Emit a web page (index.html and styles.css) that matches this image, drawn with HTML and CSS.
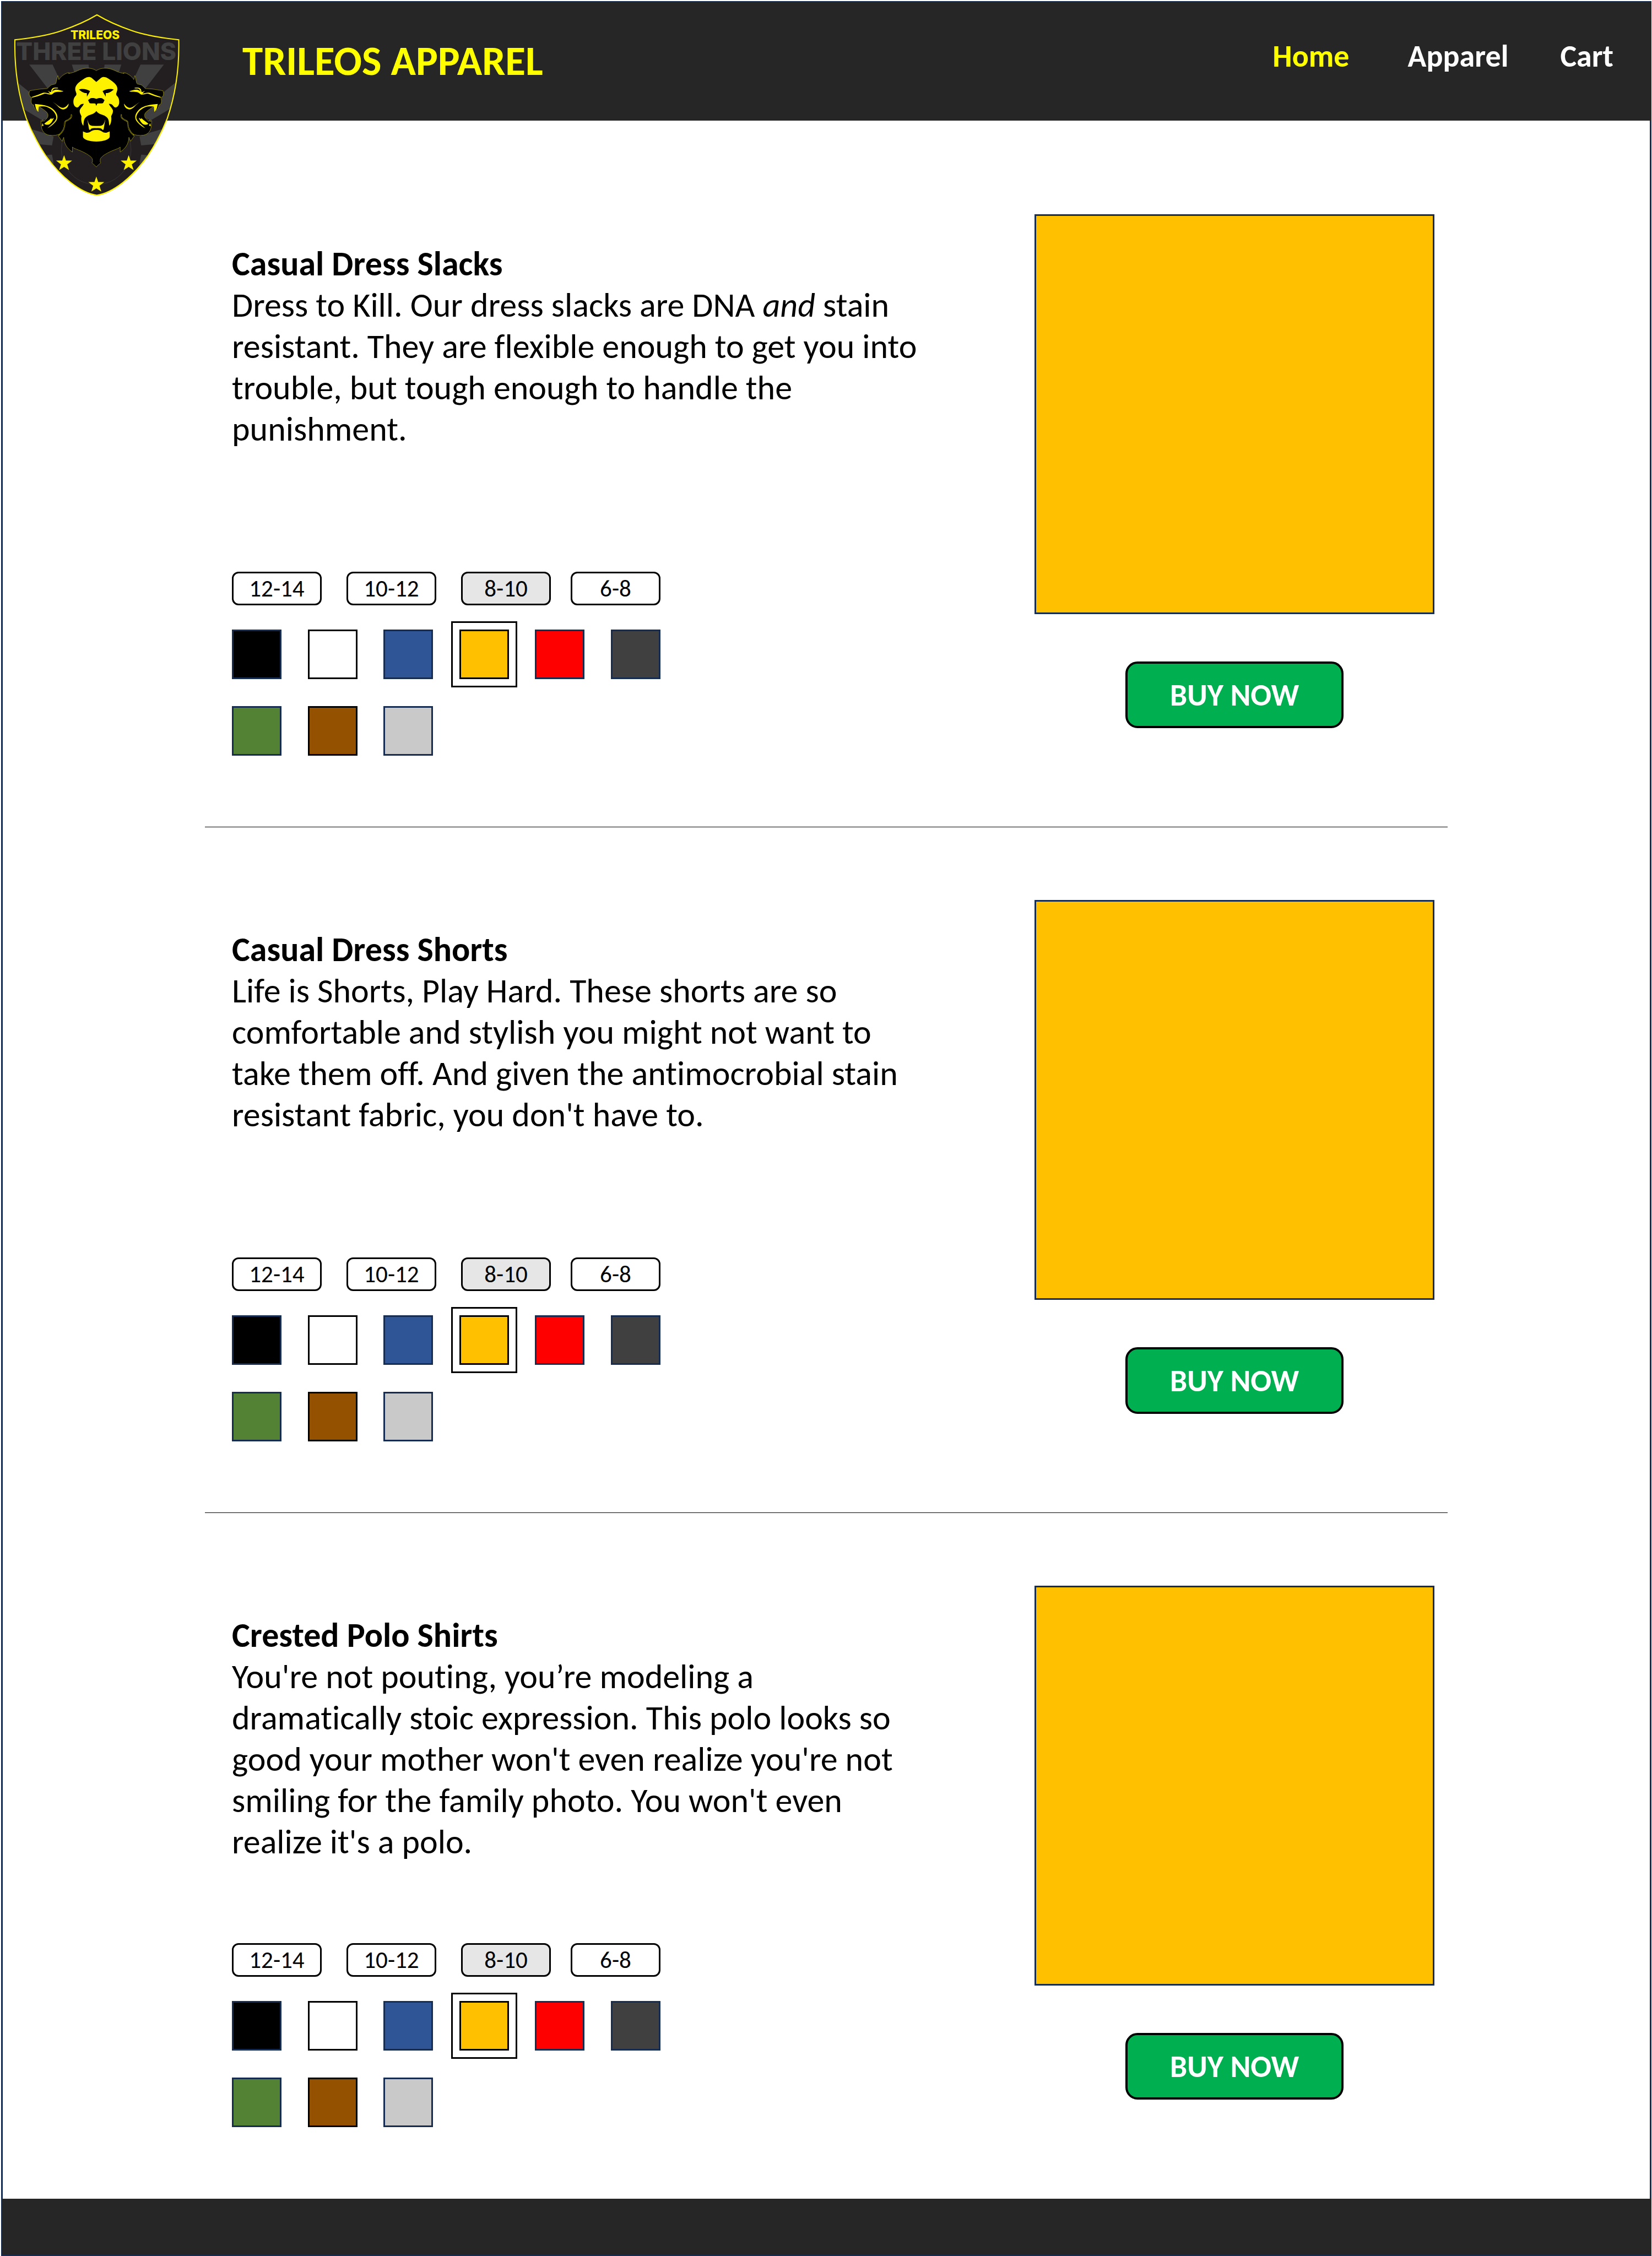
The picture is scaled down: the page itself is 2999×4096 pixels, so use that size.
FILE: index.html
```html
<!DOCTYPE html>
<html lang="en">
<head>
<meta charset="utf-8">
<meta name="viewport" content="width=device-width, initial-scale=1">
<title>Trileos Apparel</title>
<link rel="stylesheet" href="styles.css">
</head>
<body>
<header class="site-header">
  <a class="logo" href="#" aria-label="Trileos home">
    <svg class="logo-art" viewBox="37 37 444 488" aria-hidden="true">
      <defs>
        <path id="shield" d="M777 112C700 155 620 190 500 228C400 262 250 285 120 298C115 520 150 720 212 886C260 1000 310 1085 368 1166C490 1324 640 1440 776 1460C912 1440 1062 1324 1184 1166C1242 1085 1292 1000 1340 886C1402 720 1437 520 1432 298C1302 285 1152 262 1052 228C932 190 854 155 777 112Z"/>
        <clipPath id="shield-clip"><use href="#shield"/></clipPath>
        <g id="rays">
          <path d="M235 483H422L480 600L390 670Z"/>
          <path d="M576 483H710L716 540H595Z"/>
          <path d="M100 586L245 695L260 780L390 800V880L340 900L150 794Z"/>
          <path d="M220 958L345 992L430 1020L417 1087L280 1076Z"/>
          <path d="M340 1162L417 1156L430 1222L420 1260Z"/>
        </g>
        <path id="star" d="M0 -60L15 -19H64L25 9L40 52L0 28L-40 52L-25 9L-64 -19H-15Z"/>
        <path id="mane" d="M592 86C560 65 520 62 480 72C450 80 430 94 408 100L370 110L376 103L362 104C335 112 305 135 292 158L284 126C276 145 275 165 268 188C262 200 235 192 222 208C210 216 206 226 198 230L150 233C110 238 80 243 60 247C52 258 53 275 56 285C60 295 66 297 76 302C70 310 74 318 70 328C70 342 74 352 82 360L90 360C92 380 100 395 112 404L114 396L126 415L131 372C150 385 175 400 190 415C208 430 206 446 203 458C194 474 182 482 172 493L163 480L160 495L150 486C147 500 150 515 152 530C154 570 180 598 215 603C250 608 280 604 302 592L288 610L318 652L331 620C334 665 350 705 401 738V698C410 708 430 714 450 722C500 742 540 765 555 785C565 798 558 805 562 812L557 824C564 834 580 842 592 858"/>
        <g id="profile">
          <path d="M76 302L78 296C110 285 140 275 165 264C185 260 205 268 222 270C218 262 208 255 202 247C215 255 225 258 230 258C232 235 240 222 265 222L285 223V229H262C245 232 240 245 238 256C250 238 270 236 290 241L328 251C325 258 290 255 262 259C250 263 245 272 232 278C215 280 195 268 175 271C140 285 110 296 76 302Z"/>
          <path d="M243 336C275 355 300 385 325 384C345 382 360 365 371 350C368 380 350 396 325 397C298 394 285 365 243 336Z"/>
          <path d="M100 353C180 360 235 370 268 420C290 455 280 480 262 500C245 520 225 535 200 547C230 520 265 495 272 465C272 430 240 395 200 378C180 371 150 370 130 374L127 417L108 390Z"/>
          <path d="M175 512C190 495 215 485 232 465L234 475L252 463C245 480 230 520 200 520C190 520 180 516 175 512Z"/>
          <path d="M162 508L170 527L155 530Z"/>
        </g>
        <g id="face">
          <path d="M593 178L555 145C540 133 520 137 505 145C480 160 450 180 435 200C420 220 422 240 427 252C430 268 437 270 430 285C415 300 407 315 409 345C412 370 430 385 445 380C460 370 460 350 492 352C485 370 465 385 459 405C458 430 470 440 473 452C468 480 475 515 488 527C492 500 490 475 508 460C530 435 575 440 593 408Z"/>
          <path d="M520 477C530 505 532 527 560 528L593 529V546C560 546 548 548 543 562L534 558Z"/>
          <path d="M485 572C505 580 520 592 545 575C560 563 575 561 593 561V654C540 654 490 640 485 615Z"/>
        </g>
        <g id="features">
          <path d="M452 238C475 228 515 232 542 250L517 295L516 266C490 268 470 250 452 238Z"/>
          <path d="M593 313C580 304 548 304 542 310L526 322L538 346C555 352 580 345 585 352L593 368Z"/>
        </g>
        <path id="neck" d="M392 440C396 455 388 468 370 478C350 490 338 490 339 512C340 545 325 575 295 601"/>
      </defs>
      <g transform="scale(.33333 .35714)">
        <use href="#shield" class="logo-field"/>
        <g class="logo-rays" clip-path="url(#shield-clip)">
          <use href="#rays"/>
          <use href="#rays" transform="translate(1548 0) scale(-1 1)"/>
        </g>
      </g>
      <text class="logo-watermark" x="257" y="161">THREE LIONS</text>
      <text class="logo-name" x="254" y="105">TRILEOS</text>
      <circle class="logo-ring" cx="257" cy="400" r="93"/>
      <g transform="translate(60 160) scale(.33333)">
        <use href="#mane" class="logo-mane"/>
        <use href="#mane" class="logo-mane" transform="translate(1184 0) scale(-1 1)"/>
        <g class="logo-yellow">
          <use href="#profile"/>
          <use href="#profile" transform="translate(1184 0) scale(-1 1)"/>
          <use href="#face"/>
          <use href="#face" transform="translate(1184 0) scale(-1 1)"/>
        </g>
        <use href="#features"/>
        <use href="#features" transform="translate(1184 0) scale(-1 1)"/>
        <g class="logo-neck">
          <use href="#neck"/>
          <use href="#neck" transform="translate(1184 0) scale(-1 1)"/>
        </g>
        <g class="logo-neck-core">
          <use href="#neck"/>
          <use href="#neck" transform="translate(1184 0) scale(-1 1)"/>
        </g>
      </g>
      <g transform="scale(.33333 .35714)">
        <g class="logo-yellow">
          <use href="#star" x="514" y="1220"/>
          <use href="#star" x="1031" y="1220"/>
          <use href="#star" x="772" y="1380"/>
        </g>
        <use href="#shield" class="logo-outline"/>
      </g>
    </svg>
  </a>
  <h1 class="site-title">TRILEOS APPAREL</h1>
  <nav class="site-nav">
    <a class="nav-link nav-link-current" href="#" aria-current="page">Home</a>
    <a class="nav-link" href="#">Apparel</a>
    <a class="nav-link" href="#">Cart</a>
  </nav>
</header>

<main class="catalog">
  <article class="product">
    <div class="details">
      <div class="description">
        <h2 class="product-name">Casual Dress Slacks</h2>
        <p class="product-text">Dress to Kill. Our dress slacks are DNA <em>and</em> stain resistant. They are flexible enough to get you into trouble, but tough enough to handle the punishment.</p>
      </div>
      <div class="sizes" role="radiogroup" aria-label="Size">
        <label class="size"><input class="size-input" type="radio" name="size-1"><span>12-14</span></label>
        <label class="size"><input class="size-input" type="radio" name="size-1"><span>10-12</span></label>
        <label class="size"><input class="size-input" type="radio" name="size-1" checked><span>8-10</span></label>
        <label class="size"><input class="size-input" type="radio" name="size-1"><span>6-8</span></label>
      </div>
      <div class="swatches" role="radiogroup" aria-label="Color">
        <input class="swatch black" type="radio" name="color-1" aria-label="Black">
        <input class="swatch white" type="radio" name="color-1" aria-label="White">
        <input class="swatch blue" type="radio" name="color-1" aria-label="Blue">
        <input class="swatch gold" type="radio" name="color-1" aria-label="Gold" checked>
        <input class="swatch red" type="radio" name="color-1" aria-label="Red">
        <input class="swatch charcoal" type="radio" name="color-1" aria-label="Charcoal">
        <input class="swatch green" type="radio" name="color-1" aria-label="Green">
        <input class="swatch brown" type="radio" name="color-1" aria-label="Brown">
        <input class="swatch silver" type="radio" name="color-1" aria-label="Silver">
      </div>
    </div>
    <div class="purchase">
      <div class="photo" role="img" aria-label="Casual Dress Slacks in gold"></div>
      <button class="buy" type="button">BUY NOW</button>
    </div>
  </article>

  <article class="product">
    <div class="details">
      <div class="description">
        <h2 class="product-name">Casual Dress Shorts</h2>
        <p class="product-text">Life is Shorts, Play Hard. These shorts are so comfortable and stylish you might not want to take them off. And given the antimocrobial stain resistant fabric, you don't have to.</p>
      </div>
      <div class="sizes" role="radiogroup" aria-label="Size">
        <label class="size"><input class="size-input" type="radio" name="size-2"><span>12-14</span></label>
        <label class="size"><input class="size-input" type="radio" name="size-2"><span>10-12</span></label>
        <label class="size"><input class="size-input" type="radio" name="size-2" checked><span>8-10</span></label>
        <label class="size"><input class="size-input" type="radio" name="size-2"><span>6-8</span></label>
      </div>
      <div class="swatches" role="radiogroup" aria-label="Color">
        <input class="swatch black" type="radio" name="color-2" aria-label="Black">
        <input class="swatch white" type="radio" name="color-2" aria-label="White">
        <input class="swatch blue" type="radio" name="color-2" aria-label="Blue">
        <input class="swatch gold" type="radio" name="color-2" aria-label="Gold" checked>
        <input class="swatch red" type="radio" name="color-2" aria-label="Red">
        <input class="swatch charcoal" type="radio" name="color-2" aria-label="Charcoal">
        <input class="swatch green" type="radio" name="color-2" aria-label="Green">
        <input class="swatch brown" type="radio" name="color-2" aria-label="Brown">
        <input class="swatch silver" type="radio" name="color-2" aria-label="Silver">
      </div>
    </div>
    <div class="purchase">
      <div class="photo" role="img" aria-label="Casual Dress Shorts in gold"></div>
      <button class="buy" type="button">BUY NOW</button>
    </div>
  </article>

  <article class="product">
    <div class="details">
      <div class="description">
        <h2 class="product-name">Crested Polo Shirts</h2>
        <p class="product-text">You're not pouting, you’re modeling a dramatically stoic expression. This polo looks so good your mother won't even realize you're not smiling for the family photo. You won't even realize it's a polo.</p>
      </div>
      <div class="sizes" role="radiogroup" aria-label="Size">
        <label class="size"><input class="size-input" type="radio" name="size-3"><span>12-14</span></label>
        <label class="size"><input class="size-input" type="radio" name="size-3"><span>10-12</span></label>
        <label class="size"><input class="size-input" type="radio" name="size-3" checked><span>8-10</span></label>
        <label class="size"><input class="size-input" type="radio" name="size-3"><span>6-8</span></label>
      </div>
      <div class="swatches" role="radiogroup" aria-label="Color">
        <input class="swatch black" type="radio" name="color-3" aria-label="Black">
        <input class="swatch white" type="radio" name="color-3" aria-label="White">
        <input class="swatch blue" type="radio" name="color-3" aria-label="Blue">
        <input class="swatch gold" type="radio" name="color-3" aria-label="Gold" checked>
        <input class="swatch red" type="radio" name="color-3" aria-label="Red">
        <input class="swatch charcoal" type="radio" name="color-3" aria-label="Charcoal">
        <input class="swatch green" type="radio" name="color-3" aria-label="Green">
        <input class="swatch brown" type="radio" name="color-3" aria-label="Brown">
        <input class="swatch silver" type="radio" name="color-3" aria-label="Silver">
      </div>
    </div>
    <div class="purchase">
      <div class="photo" role="img" aria-label="Crested Polo Shirt in gold"></div>
      <button class="buy" type="button">BUY NOW</button>
    </div>
  </article>
</main>

<footer class="site-footer"></footer>
</body>
</html>
```

FILE: styles.css
```css
:root {
  --navy: #172c51;
  --charcoal: #262626;
  --yellow: #ffff00;
}

* {
  box-sizing: border-box;
}

body {
  margin: 0;
  padding: 2px 1px 0 2px;
  background: #fff;
  color: #000;
  font-family: "Carlito", "Calibri", "Lato", sans-serif;
  font-variant-ligatures: none;
}

/* Header */
.site-header {
  position: relative;
  display: flex;
  align-items: center;
  justify-content: space-between;
  min-height: 217px;
  padding: 0 68px 0 437px;
  background: var(--charcoal);
  border: 1px solid var(--navy);
  border-bottom: 0;
}

.logo {
  position: absolute;
  top: 22px;
  left: 22px;
  z-index: 1;
}

.logo-art {
  display: block;
  width: 302px;
  height: 332px;
}

.logo-field { fill: #231f20; }
.logo-outline { fill: none; stroke: #fff200; stroke-width: 9; }
.logo-rays { fill: #404040; }
.logo-yellow { fill: #fff200; }
.logo-mane { fill: #000; stroke: #b3a90a; stroke-width: 3; }
.logo-ring { fill: none; stroke: #404040; stroke-width: 1; }
.logo-neck { fill: none; stroke: #b3a90a; stroke-width: 9; stroke-linecap: round; }
.logo-neck-core { fill: none; stroke: #000; stroke-width: 4; }

.logo-watermark,
.logo-name {
  font-family: "Inter", sans-serif;
  font-weight: 800;
  text-anchor: middle;
}

.logo-watermark { fill: #404040; font-size: 65px; }
.logo-name { fill: #fff200; font-size: 31px; }

.site-title {
  margin: 0;
  color: var(--yellow);
  font-size: 75px;
  line-height: 90px;
  font-weight: 700;
}

.site-nav {
  display: flex;
  gap: 94px;
  padding-bottom: 18px;
}

.nav-link {
  color: #fff;
  font-size: 56px;
  line-height: 68px;
  font-weight: 700;
  text-decoration: none;
}

.nav-link-current {
  margin-right: 12px;
  color: var(--yellow);
}

/* Product list */
.catalog {
  padding: 38px 367px 0;
  border: solid var(--navy);
  border-width: 0 3px;
}

.product {
  display: flex;
  justify-content: space-between;
  padding: 132px 24px 129px 49px;
  border-bottom: 1px solid #000;
}

.product:last-child {
  border-bottom-color: transparent;
}

.details {
  padding-top: 53px;
}

.description {
  max-width: 1260px;
  min-height: 596px;
}

.product-name,
.product-text {
  margin: 0;
  font-size: 62px;
  line-height: 75px;
}

.product-name {
  font-weight: 700;
}

.sizes {
  display: grid;
  grid-template-columns: 208px 208px 199px 163px;
}

.size {
  position: relative;
  display: flex;
  align-items: center;
  justify-content: center;
  width: 163px;
  height: 61px;
  border: 3px solid #000;
  border-radius: 12px;
  font-size: 43px;
  line-height: 52px;
}

.size:has(:checked) {
  background: #e6e6e6;
}

.size-input {
  position: absolute;
  inset: 0;
  margin: 0;
  appearance: none;
}

.swatches {
  display: grid;
  grid-template-columns: repeat(6, 90px);
  justify-content: space-between;
  row-gap: 49px;
  width: 778px;
  margin-top: 44px;
}

.swatch {
  width: 90px;
  height: 90px;
  margin: 0;
  appearance: none;
  border: 3px solid var(--navy);
}

.swatch:checked {
  outline: 3px solid #000;
  outline-offset: 12px;
}

.black { background: #000; }
.white { background: #fff; border-color: #000; }
.blue { background: #2f5597; }
.gold { background: #ffc000; border-color: #000; }
.red { background: #f00; }
.charcoal { background: #404040; }
.green { background: #548235; }
.brown { background: #945200; border-color: #000; }
.silver { background: #c9c9c9; }

.purchase {
  display: flex;
  flex-direction: column;
  align-items: center;
  gap: 86px;
}

.photo {
  width: 726px;
  aspect-ratio: 1;
  background: #ffc000;
  border: 3px solid var(--navy);
}

.buy {
  width: 396px;
  height: 121px;
  padding: 0;
  background: #00b050;
  border: 4px solid #000;
  border-radius: 22px;
  color: #fff;
  font-family: inherit;
  font-size: 56px;
  font-weight: 700;
}

.site-footer {
  min-height: 104px;
  background: var(--charcoal);
  border: solid var(--navy);
  border-width: 0 1px 2px;
}
```
